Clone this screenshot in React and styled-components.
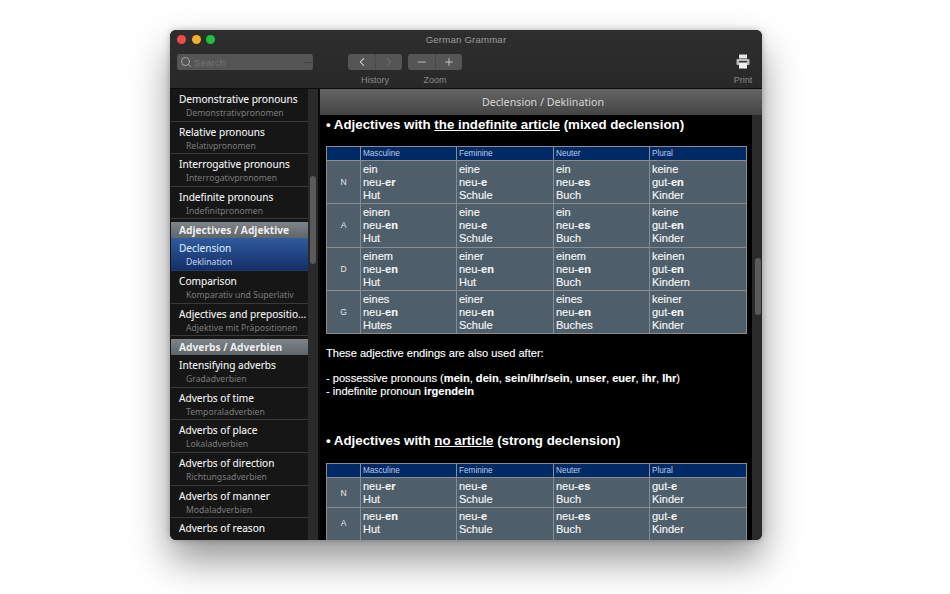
import styled, { createGlobalStyle } from "styled-components";
import { Search, ChevronLeft, ChevronRight, Minus, Plus } from "lucide-react";

const GlobalStyle = createGlobalStyle`
  html, body {
    margin: 0;
    padding: 0;
    background: #fff;
  }
  body {
    font-family: "Liberation Sans", Arial, sans-serif;
  }
`;

const sidebarItems = [
  { title: "Demonstrative pronouns", sub: "Demonstrativpronomen" },
  { title: "Relative pronouns", sub: "Relativpronomen" },
  { title: "Interrogative pronouns", sub: "Interrogativpronomen" },
  { title: "Indefinite pronouns", sub: "Indefinitpronomen" },
  { header: "Adjectives / Adjektive" },
  { title: "Declension", sub: "Deklination", active: true },
  { title: "Comparison", sub: "Komparativ und Superlativ" },
  { title: "Adjectives and prepositio...", sub: "Adjektive mit Präpositionen" },
  { header: "Adverbs / Adverbien" },
  { title: "Intensifying adverbs", sub: "Gradadverbien" },
  { title: "Adverbs of time", sub: "Temporaladverbien" },
  { title: "Adverbs of place", sub: "Lokaladverbien" },
  { title: "Adverbs of direction", sub: "Richtungsadverbien" },
  { title: "Adverbs of manner", sub: "Modaladverbien" },
  { title: "Adverbs of reason", sub: "" },
];

const mixedRows = [
  {
    label: "N",
    cells: [
      ["ein", "neu-", "er", "Hut"],
      ["eine", "neu-", "e", "Schule"],
      ["ein", "neu-", "es", "Buch"],
      ["keine", "gut-", "en", "Kinder"],
    ],
  },
  {
    label: "A",
    cells: [
      ["einen", "neu-", "en", "Hut"],
      ["eine", "neu-", "e", "Schule"],
      ["ein", "neu-", "es", "Buch"],
      ["keine", "gut-", "en", "Kinder"],
    ],
  },
  {
    label: "D",
    cells: [
      ["einem", "neu-", "en", "Hut"],
      ["einer", "neu-", "en", "Hut"],
      ["einem", "neu-", "en", "Buch"],
      ["keinen", "gut-", "en", "Kindern"],
    ],
  },
  {
    label: "G",
    cells: [
      ["eines", "neu-", "en", "Hutes"],
      ["einer", "neu-", "en", "Schule"],
      ["eines", "neu-", "en", "Buches"],
      ["keiner", "gut-", "en", "Kinder"],
    ],
  },
];

const strongRows = [
  {
    label: "N",
    cells: [
      [null, "neu-", "er", "Hut"],
      [null, "neu-", "e", "Schule"],
      [null, "neu-", "es", "Buch"],
      [null, "gut-", "e", "Kinder"],
    ],
  },
  {
    label: "A",
    cells: [
      [null, "neu-", "en", "Hut"],
      [null, "neu-", "e", "Schule"],
      [null, "neu-", "es", "Buch"],
      [null, "gut-", "e", "Kinder"],
    ],
  },
];

const Page = styled.div`
  width: 950px;
  height: 594px;
  padding: 30px 0 0 170px;
  box-sizing: border-box;
  overflow: hidden;
`;

const Window = styled.div`
  width: 592px;
  height: 510px;
  border-radius: 6px;
  overflow: hidden;
  display: flex;
  flex-direction: column;
  background: #262626;
  box-shadow: 0 20px 38px rgba(0, 0, 0, 0.42), 0 0 6px rgba(0, 0, 0, 0.25);
`;

const Chrome = styled.header`
  height: 58px;
  flex: none;
  background: linear-gradient(#2e2e2e, #282828);
  border-bottom: 1px solid #0c0c0c;
  display: flex;
  flex-direction: column;
`;

const TitleBar = styled.div`
  height: 20px;
  box-sizing: border-box;
  padding-bottom: 2px;
  display: flex;
  align-items: center;
  position: relative;
  justify-content: center;
  font-size: 9.6px;
  letter-spacing: 0.2px;
  color: #9c9c9c;
`;

const Lights = styled.div`
  position: absolute;
  left: 7px;
  top: 5px;
  display: flex;
  gap: 5.5px;
`;

const Light = styled.span`
  width: 9px;
  height: 9px;
  border-radius: 50%;
  background: ${(p) => p.color};
`;

const Toolbar = styled.div`
  display: flex;
  padding: 4px 0 0 7px;
  font-size: 9px;
  color: #8a8a8a;
`;

const SearchBox = styled.div`
  width: 136px;
  height: 16px;
  margin-right: 35px;
  border-radius: 3px;
  background: #555;
  display: flex;
  align-items: center;
  gap: 2px;
  padding-left: 3px;
  box-sizing: border-box;
  position: relative;
  color: #747474;
  font-size: 9.5px;
  letter-spacing: 0.2px;
  &::after {
    content: "";
    position: absolute;
    right: 0;
    top: 8px;
    width: 10px;
    height: 1px;
    background: #444;
  }
  svg {
    color: #bdbdbd;
  }
`;

const ToolGroup = styled.div`
  display: flex;
  flex-direction: column;
  align-items: center;
  gap: 5px;
  margin-right: ${(p) => p.$gap || 0}px;
`;

const Segments = styled.div`
  display: flex;
  height: 16px;
  border-radius: 3px;
  overflow: hidden;
  background: #555;
`;

const Segment = styled.button`
  width: 27px;
  padding: 0;
  border: 0;
  background: transparent;
  display: flex;
  align-items: center;
  justify-content: center;
  color: ${(p) => (p.disabled ? "#777" : "#e2e2e2")};
  & + & {
    border-left: 1px solid #494949;
  }
`;

const PrintGroup = styled.div`
  margin-left: auto;
  margin-top: 0;
  width: 38px;
  display: flex;
  flex-direction: column;
  align-items: center;
  gap: 6px;
`;

const Body = styled.div`
  flex: 1;
  display: flex;
  min-height: 0;
`;

const Sidebar = styled.nav`
  width: 138px;
  flex: none;
  background: #161616;
  overflow: hidden;
  padding-left: 1px;
  box-sizing: border-box;
`;

const Row = styled.div`
  height: 32.6px;
  box-sizing: border-box;
  padding: 4px 0 0 8px;
  border-bottom: 1px solid ${(p) => (p.$active ? "#1d3a6c" : "#3a3a3a")};
  background: ${(p) =>
    p.$active ? "linear-gradient(#2f5b9c, #142f68)" : "transparent"};
  white-space: nowrap;
  overflow: hidden;
`;

const RowTitle = styled.div`
  font-family: "Noto Sans", "Liberation Sans", sans-serif;
  font-size: 10.1px;
  line-height: 13px;
  color: ${(p) => (p.$active ? "#d9e6f8" : "#f2f2f2")};
  -webkit-text-stroke: 0.1px currentColor;
`;

const RowSub = styled.div`
  font-family: "Noto Sans", "Liberation Sans", sans-serif;
  font-size: 8.65px;
  line-height: 14px;
  padding-left: 7px;
  color: ${(p) => (p.$active ? "#c6d6ee" : "#7c7c7c")};
`;

const GroupHeader = styled.div`
  height: 16.5px;
  margin-top: 2.5px;
  padding-left: 8px;
  font-family: "Noto Sans", "Liberation Sans", sans-serif;
  font-size: 10.2px;
  font-weight: 700;
  line-height: 16px;
  color: #eee;
  background: linear-gradient(#7e8488, #5f6569);
`;

const Track = styled.div`
  width: ${(p) => p.$width}px;
  flex: none;
  background: #2a2a2a;
  display: flex;
  justify-content: center;
`;

const Thumb = styled.div`
  width: 6px;
  height: ${(p) => p.$height}px;
  margin-top: ${(p) => p.$top}px;
  margin-left: ${(p) => p.$left || 0}px;
  border-radius: 3px;
  background: #5a5a5a;
`;

const Divider = styled.div`
  width: 2px;
  flex: none;
  background: #0a0a0a;
`;

const Main = styled.main`
  flex: 1;
  display: flex;
  flex-direction: column;
  min-width: 0;
`;

const MainTitle = styled.div`
  height: 26px;
  flex: none;
  display: flex;
  align-items: center;
  justify-content: center;
  padding-left: 4px;
  font-family: "Noto Sans", "Liberation Sans", sans-serif;
  font-size: 10.7px;
  color: #d6d6d6;
  background: linear-gradient(#656565, #444);
`;

const MainBody = styled.div`
  flex: 1;
  display: flex;
  min-height: 0;
`;

const Article = styled.article`
  flex: 1;
  background: #000;
  color: #fff;
  overflow: hidden;
  padding: 1px 0 0 6px;
  box-sizing: border-box;
`;

const Heading = styled.h2`
  margin: ${(p) => p.$top}px 0 0;
  font-size: 13.3px;
  line-height: 18px;
  font-weight: 700;
  white-space: nowrap;
`;

const Note = styled.p`
  margin: 0;
  font-size: 11.1px;
  line-height: 13px;
  margin-top: ${(p) => p.$top || 0}px;
  -webkit-text-stroke: 0.12px #fff;
`;

const Grid = styled.table`
  width: 420px;
  margin-top: ${(p) => p.$top}px;
  border-collapse: collapse;
  table-layout: fixed;
  border: 1px solid #8c8c8c;
  font-size: 11px;
  /* the last row of a table that runs on below the window */
  ${(p) => p.$runsOn && "tbody tr:last-child td { padding-bottom: 6px; }"}
`;

const HeadCell = styled.th`
  height: 13px;
  padding: 0 0 0 2px;
  border: 1px solid #8c8c8c;
  background: #002a66;
  color: #b9cbe6;
  font-size: 8.2px;
  font-weight: 400;
  text-align: left;
`;

const LabelCell = styled.td`
  width: 33px;
  border: 1px solid #8c8c8c;
  background: #4f5e6b;
  color: #e8e8e8;
  font-size: 8.5px;
  text-align: center;
  vertical-align: middle;
`;

const FormCell = styled.td`
  padding: 2px 0 1px 2px;
  border: 1px solid #8c8c8c;
  background: #4f5e6b;
  color: #f6f6f6;
  font-size: 11px;
  line-height: 13.1px;
  vertical-align: top;
  -webkit-text-stroke: 0.15px #f6f6f6;
`;

const Line = styled.div`
  white-space: nowrap;
`;

const Printer = () => (
  <svg width="14" height="15" viewBox="0 0 14 15" fill="none">
    <rect x="3" y="0.5" width="8" height="4" fill="#e4e4e4" />
    <rect x="0.5" y="5" width="13" height="6" rx="1" fill="#bcbcbc" />
    <rect x="3" y="9" width="8" height="5.5" fill="#f0f0f0" />
    <rect x="3" y="7" width="8" height="1.4" fill="#3a3a3a" />
  </svg>
);

const DeclensionTable = ({ rows, top, runsOn }) => (
  <Grid $top={top} $runsOn={runsOn}>
    <colgroup>
      <col style={{ width: 34 }} />
      <col style={{ width: 96 }} />
      <col style={{ width: 97 }} />
      <col style={{ width: 96 }} />
      <col style={{ width: 97 }} />
    </colgroup>
    <thead>
      <tr>
        <HeadCell />
        <HeadCell>Masculine</HeadCell>
        <HeadCell>Feminine</HeadCell>
        <HeadCell>Neuter</HeadCell>
        <HeadCell>Plural</HeadCell>
      </tr>
    </thead>
    <tbody>
      {rows.map((row) => (
        <tr key={row.label}>
          <LabelCell>{row.label}</LabelCell>
          {row.cells.map(([article, stem, ending, noun], i) => (
            <FormCell key={i}>
              {article && <Line>{article}</Line>}
              <Line>
                {stem}
                <b>{ending}</b>
              </Line>
              <Line>{noun}</Line>
            </FormCell>
          ))}
        </tr>
      ))}
    </tbody>
  </Grid>
);

export default function App() {
  return (
    <Page>
      <GlobalStyle />
      <Window>
        <Chrome>
          <TitleBar>
            <Lights>
              <Light color="#f4494a" />
              <Light color="#f5ae2c" />
              <Light color="#1fc23d" />
            </Lights>
            German Grammar
          </TitleBar>
          <Toolbar>
            <SearchBox>
              <Search size={12} strokeWidth={1.6} />
              Search
            </SearchBox>
            <ToolGroup $gap={6}>
              <Segments>
                <Segment>
                  <ChevronLeft size={14} strokeWidth={1.8} />
                </Segment>
                <Segment disabled>
                  <ChevronRight size={14} strokeWidth={1.5} />
                </Segment>
              </Segments>
              History
            </ToolGroup>
            <ToolGroup>
              <Segments>
                <Segment>
                  <Minus size={12} strokeWidth={1.5} />
                </Segment>
                <Segment>
                  <Plus size={12} strokeWidth={1.5} />
                </Segment>
              </Segments>
              Zoom
            </ToolGroup>
            <PrintGroup>
              <Printer />
              Print
            </PrintGroup>
          </Toolbar>
        </Chrome>
        <Body>
          <Sidebar>
            {sidebarItems.map((item) =>
              item.header ? (
                <GroupHeader key={item.header}>{item.header}</GroupHeader>
              ) : (
                <Row key={item.title} $active={item.active}>
                  <RowTitle $active={item.active}>{item.title}</RowTitle>
                  <RowSub $active={item.active}>{item.sub}</RowSub>
                </Row>
              )
            )}
          </Sidebar>
          <Track $width={10}>
            <Thumb $height={88} $top={87} />
          </Track>
          <Divider />
          <Main>
            <MainTitle>Declension / Deklination</MainTitle>
            <MainBody>
              <Article>
                <Heading $top={0}>
                  • Adjectives with <u>the indefinite article</u> (mixed
                  declension)
                </Heading>
                <DeclensionTable rows={mixedRows} top={12} />
                <Note $top={13}>These adjective endings are also used after:</Note>
                <Note $top={12}>
                  - possessive pronouns (<b>mein</b>, <b>dein</b>,{" "}
                  <b>sein/ihr/sein</b>, <b>unser</b>, <b>euer</b>, <b>ihr</b>,{" "}
                  <b>Ihr</b>)
                </Note>
                <Note>
                  - indefinite pronoun <b>irgendein</b>
                </Note>
                <Heading $top={34}>
                  • Adjectives with <u>no article</u> (strong declension)
                </Heading>
                <DeclensionTable rows={strongRows} top={13} runsOn />
              </Article>
              <Track $width={10}>
                <Thumb $height={57} $top={143} $left={2} />
              </Track>
            </MainBody>
          </Main>
        </Body>
      </Window>
    </Page>
  );
}
